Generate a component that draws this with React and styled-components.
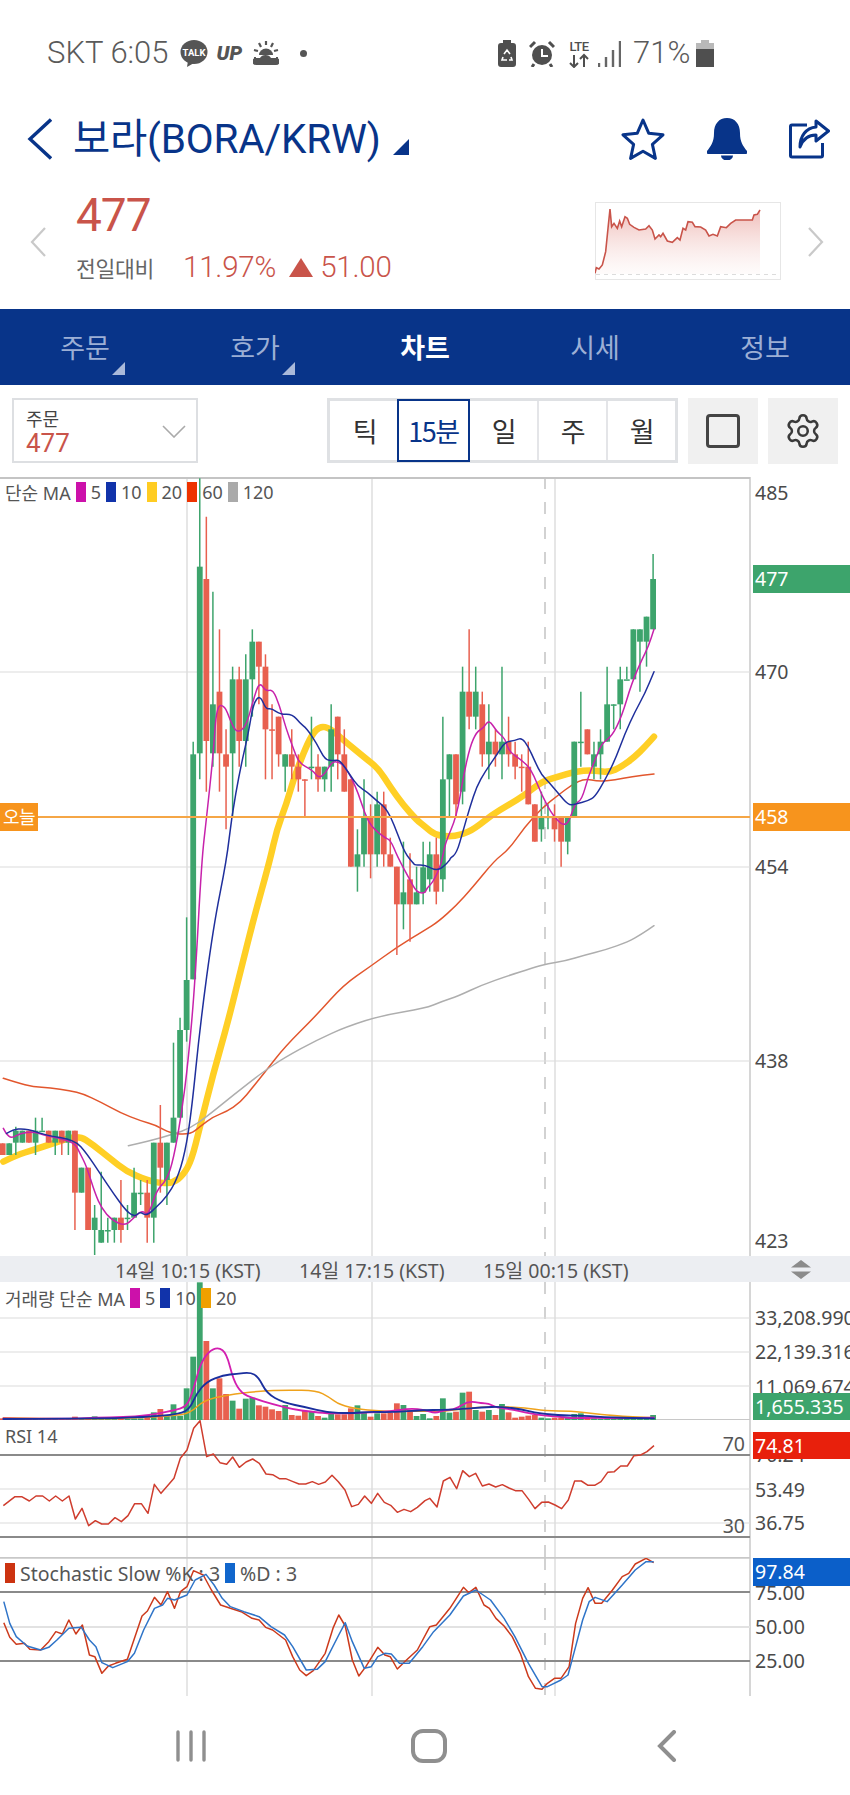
import React from 'react';
import styled, { createGlobalStyle } from 'styled-components';
import { Settings } from 'lucide-react';

const navy = '#083489';
const upRed = '#c9544a';
const green = '#3da46c';
const red = '#e8604f';
const font = '"Noto Sans", "Noto Sans CJK KR", sans-serif';
const headFont = 'Roboto, "Noto Sans CJK KR", sans-serif';

const GlobalStyle = createGlobalStyle`
  html, body { margin: 0; padding: 0; background: #fff; }
  body { font-family: ${font}; }
`;

const Page = styled.div`
  width: 850px;
  height: 1795px;
  overflow: hidden;
  background: #fff;
`;

/* status bar */
const StatusBar = styled.div`
  height: 100px;
  box-sizing: border-box;
  padding: 40px 0 0 47px;
  display: flex;
  align-items: flex-start;
  font-family: ${headFont};
  color: #5a5a5a;
`;
const StatusText = styled.span`
  font-size: 31px;
  line-height: 26px;
  font-weight: 300;
  letter-spacing: 0;
  white-space: nowrap;
  margin-left: ${p => p.$gap || 0}px;
`;
const UpMark = styled.span`
  font: italic 900 20px/26px Roboto, sans-serif;
  margin: 0 11px 0 9px;
  color: #555;
`;
const Dot = styled.span`
  width: 7px;
  height: 7px;
  border-radius: 50%;
  background: #555;
  margin: 10px 0 0 21px;
`;
const StatusRight = styled.div`
  margin-left: 191px;
  display: flex;
  align-items: flex-start;
`;
const StatusIcon = styled.svg`
  display: block;
  flex: none;
  margin-left: ${p => p.$gap || 0}px;
`;

/* header */
const Header = styled.div`
  height: 78px;
  display: flex;
  align-items: center;
  padding-left: 27px;
  color: ${navy};
`;
const Title = styled.h1`
  margin: 0 0 0 21px;
  font: 400 40.5px/46px ${headFont};
  letter-spacing: -0.2px;
  color: ${navy};
`;
const TitleCaret = styled.span`
  width: 0;
  height: 0;
  margin: 16px 0 0 12px;
  border-left: 16px solid transparent;
  border-bottom: 16px solid ${navy};
`;
const HeaderActions = styled.div`
  margin-left: auto;
  display: flex;
  align-items: center;
  padding-right: 20px;
  gap: 42px;
`;

/* quote */
const Quote = styled.div`
  height: 131px;
  box-sizing: border-box;
  padding: 24px 26px 0 30px;
  display: flex;
  align-items: flex-start;
`;
const PrevArrow = styled.svg`
  display: block;
  flex: none;
  margin-top: 25px;
`;
const PriceCol = styled.div`
  margin: -12px 0 0 30px;
`;
const Price = styled.div`
  font: 400 46px/50px ${headFont};
  color: ${upRed};
  letter-spacing: -1px;
`;
const ChangeRow = styled.div`
  margin-top: 9px;
  display: flex;
  align-items: center;
  font-family: ${headFont};
  white-space: nowrap;
`;
const ChangeLabel = styled.span`
  font-size: 21.5px;
  color: #666;
  width: 107px;
  letter-spacing: -0.3px;
`;
const ChangeValue = styled.span`
  font-size: 29.5px;
  line-height: 36px;
  font-weight: 300;
  color: ${upRed};
  letter-spacing: -0.2px;
`;
const UpTriangle = styled.span`
  width: 0;
  height: 0;
  margin: 0 7px 0 13px;
  border-left: 12px solid transparent;
  border-right: 12px solid transparent;
  border-bottom: 19px solid ${upRed};
`;
const Spark = styled.svg`
  margin-left: auto;
  display: block;
  flex: none;
`;
const NextArrow = styled(PrevArrow)`
  margin-left: 27px;
`;

/* tabs */
const TabBar = styled.div`
  height: 76px;
  background: ${navy};
  display: grid;
  grid-template-columns: repeat(5, 1fr);
`;
const Tab = styled.div`
  position: relative;
  display: flex;
  align-items: center;
  justify-content: center;
  padding-bottom: 1px;
  font-size: 27px;
  font-family: "Noto Sans CJK KR", sans-serif;
  font-weight: ${p => (p.$active ? 700 : 400)};
  color: ${p => (p.$active ? '#fff' : '#9cafd5')};
`;
const TabMark = styled.span`
  position: absolute;
  left: 112px;
  top: 53px;
  width: 0;
  height: 0;
  border-left: 13px solid transparent;
  border-bottom: 13px solid #a9b9da;
`;

/* toolbar */
const Toolbar = styled.div`
  height: 92px;
  box-sizing: border-box;
  padding: 13px 12px 0;
  display: flex;
  align-items: flex-start;
  font-family: "Noto Sans CJK KR", sans-serif;
`;
const Select = styled.div`
  width: 186px;
  height: 65px;
  box-sizing: border-box;
  border: 2px solid #dddfe2;
  padding: 8px 0 0 12px;
  position: relative;
`;
const SelectName = styled.div`
  font-size: 18px;
  line-height: 21px;
  color: #444;
`;
const SelectPrice = styled.div`
  font: 400 26px/28px ${headFont};
  color: ${upRed};
`;
const SelectCaret = styled.svg`
  position: absolute;
  right: 10px;
  top: 25px;
`;
const Periods = styled.div`
  margin-left: auto;
  width: 351px;
  height: 65px;
  box-sizing: border-box;
  border: 3px solid #dfe1e4;
  display: grid;
  grid-template-columns: repeat(5, 1fr);
`;
const Period = styled.div`
  display: flex;
  align-items: center;
  justify-content: center;
  font-size: 27px;
  letter-spacing: -1.5px;
  color: ${p => (p.$active ? navy : '#333')};
  box-shadow: ${p => (p.$active ? `0 0 0 2px ${navy}` : 'none')};
  border-left: ${p => (p.$first || p.$active ? 0 : '2px solid #e4e5e8')};
  position: relative;
  z-index: ${p => (p.$active ? 1 : 0)};
`;
const SquareButton = styled.div`
  width: 70px;
  height: 66px;
  margin-left: 10px;
  background: #f0f0f0;
  display: flex;
  align-items: center;
  justify-content: center;
  color: #3a3a3a;
`;
const SquareGlyph = styled.div`
  width: 34px;
  height: 34px;
  box-sizing: border-box;
  border: 3px solid #444;
  border-radius: 4px;
`;

/* chart */
const ChartArea = styled.div`
  width: 850px;
`;
const Panel = styled.div`
  position: relative;
  height: ${p => p.$h}px;
  overflow: hidden;
`;
const PanelSvg = styled.svg`
  display: block;
`;
const Legend = styled.div`
  position: absolute;
  left: 5px;
  top: ${p => p.$top}px;
  display: flex;
  align-items: center;
  gap: 5px;
  height: 22px;
  font-size: ${p => p.$size || 18}px;
  color: #555;
  white-space: nowrap;
  font-family: ${font};
`;
const Swatch = styled.span`
  width: 10px;
  height: 20px;
  background: ${p => p.$c};
`;
const AxisValue = styled.div`
  position: absolute;
  left: 755px;
  top: ${p => p.$y}px;
  transform: translateY(-50%);
  font-size: 19.5px;
  line-height: 24px;
  color: #4a4a4a;
  white-space: nowrap;
`;
const AxisTag = styled.div`
  position: absolute;
  left: 753px;
  right: 0;
  top: ${p => p.$y}px;
  height: ${p => p.$h}px;
  line-height: ${p => p.$h}px;
  padding-left: 2px;
  font-size: 19.5px;
  color: #fff;
  background: ${p => p.$bg};
`;
const LevelMark = styled.div`
  position: absolute;
  right: 105px;
  top: ${p => p.$y}px;
  transform: translateY(-50%);
  font-size: 19.5px;
  color: #555;
`;
const TodayTag = styled.div`
  position: absolute;
  left: 0;
  top: 326px;
  width: 38px;
  height: 28px;
  line-height: 26px;
  text-align: center;
  font-size: 18px;
  letter-spacing: -0.5px;
  font-family: "Noto Sans CJK KR", sans-serif;
  color: #fff;
  background: #f7941d;
`;
const TimeAxis = styled.div`
  height: 26px;
  background: #eceef2;
  display: flex;
  align-items: center;
  padding-left: 115px;
  gap: 40px;
  font-size: 19.5px;
  color: #555;
  position: relative;
`;
const TimeLabel = styled.span`
  width: 144px;
  white-space: nowrap;
`;
const Resize = styled.svg`
  position: absolute;
  left: 790px;
  top: 4px;
`;

/* nav */
const NavBar = styled.div`
  height: 99px;
  padding-left: 72px;
  display: grid;
  grid-template-columns: repeat(3, 238px);
  align-items: center;
  justify-items: center;
`;

const candleX = i => 2.67 + 6.57 * i;

// g/r, high, body top, body bottom, low, in 3x crop units
const lowerCandles = [
  ['r', 850, 850, 885, 885], ['g', 850, 850, 885, 885], ['g', 800, 812, 848, 885], ['g', 812, 812, 848, 848],
  ['r', 812, 812, 848, 848], ['g', 773, 812, 848, 885], ['g', 773, 812, 812, 812], ['r', 812, 812, 848, 848],
  ['g', 812, 812, 848, 885], ['r', 812, 812, 848, 885], ['g', 812, 812, 848, 885], ['r', 812, 812, 998, 1110],
  ['g', 923, 923, 998, 998], ['r', 923, 923, 1110, 1110], ['g', 1035, 1073, 1110, 1185], ['g', 935, 1110, 1148, 1148],
  ['g', 1073, 1110, 1110, 1148], ['g', 1073, 1073, 1110, 1148], ['r', 960, 1073, 1110, 1148], ['g', 1035, 1073, 1073, 1110],
  ['g', 923, 998, 1073, 1073], ['g', 960, 998, 998, 1035], ['r', 960, 998, 1073, 1148], ['g', 848, 848, 1073, 1148],
  ['r', 735, 848, 923, 998], ['g', 848, 848, 960, 1035], ['g', 548, 773, 848, 848], ['g', 473, 510, 773, 773],
  ['g', 172, 360, 510, 545],
];
const upperCandles = [
  ['g', 815, 853, 1528, 1528], ['g', 25, 290, 850, 928], ['r', 140, 327, 813, 965], ['g', 365, 703, 850, 890],
  ['r', 478, 665, 850, 965], ['r', 778, 853, 890, 1078], ['g', 590, 628, 850, 1040], ['r', 590, 628, 813, 890],
  ['g', 553, 628, 813, 890], ['g', 478, 515, 628, 740], ['r', 515, 515, 590, 703], ['r', 553, 590, 778, 928],
  ['r', 703, 778, 778, 928], ['r', 740, 740, 853, 890], ['g', 853, 853, 890, 965], ['r', 778, 853, 890, 928],
  ['r', 853, 890, 928, 965], ['r', 928, 928, 928, 1040], ['g', 740, 890, 890, 928], ['r', 853, 890, 928, 965],
  ['g', 890, 890, 928, 965], ['g', 703, 778, 890, 965], ['r', 740, 740, 853, 928], ['r', 778, 853, 965, 965],
  ['r', 928, 928, 1190, 1190], ['g', 1078, 1153, 1190, 1265], ['g', 928, 1040, 1153, 1190], ['r', 1003, 1040, 1153, 1225],
  ['g', 965, 1003, 1153, 1190], ['r', 965, 1003, 1153, 1190], ['r', 1103, 1153, 1190, 1190], ['r', 1190, 1190, 1303, 1455],
  ['g', 1115, 1267, 1303, 1378], ['r', 1150, 1228, 1303, 1415], ['g', 1190, 1267, 1303, 1303], ['g', 1115, 1192, 1267, 1303],
  ['g', 1115, 1153, 1228, 1265], ['r', 1103, 1153, 1265, 1303], ['g', 740, 928, 1228, 1265], ['g', 853, 853, 928, 1040],
  ['r', 853, 853, 1003, 1040], ['g', 590, 665, 965, 1003], ['r', 478, 665, 740, 778], ['g', 590, 665, 740, 778],
  ['r', 665, 703, 853, 890], ['g', 703, 815, 853, 928], ['r', 778, 815, 853, 890], ['g', 590, 815, 853, 928],
  ['r', 740, 815, 853, 890], ['r', 815, 853, 890, 928], ['r', 853, 890, 890, 965], ['r', 815, 890, 1003, 1003],
  ['r', 1003, 1003, 1115, 1115], ['g', 965, 1040, 1078, 1115], ['g', 1003, 1040, 1040, 1078], ['r', 1003, 1040, 1078, 1115],
  ['r', 1040, 1040, 1115, 1190], ['g', 1040, 1040, 1115, 1153], ['g', 815, 815, 1040, 1040], ['g', 665, 815, 815, 890],
  ['r', 778, 778, 853, 853], ['g', 815, 853, 890, 928], ['g', 778, 815, 853, 928], ['g', 590, 703, 815, 815],
  ['g', 703, 703, 703, 778], ['g', 590, 628, 703, 778], ['g', 590, 628, 628, 628], ['g', 478, 478, 628, 628],
  ['g', 478, 478, 515, 665], ['g', 440, 440, 515, 590], ['g', 252, 327, 478, 478],
];
const candles = [
  ...lowerCandles.map(c => [c[0], ...c.slice(1).map(z => 860 + z / 3)]),
  ...upperCandles.map(c => [c[0], ...c.slice(1).map(z => 470 + z / 3)]),
];

const volumeTops = [
  505, 505, 506, 506, 506, 506, 506, 506, 506, 506, 506, 500, 505, 505, 499, 505, 506, 505, 505, 506,
  505, 505, 495, 487, 477, 497, 463, 497, 415, 320, 97, 273, 415, 385, 432, 452, 476, 446, 443, 466,
  470, 478, 483, 465, 495, 497, 483, 483, 498, 503, 490, 493, 493, 475, 466, 488, 500, 490, 490, 488,
  460, 465, 480, 498, 492, 505, 498, 445, 488, 485, 428, 425, 480, 485, 480, 495, 462, 487, 503, 500,
  497, 495, 503, 505, 503, 503, 503, 492, 490, 500, 505, 507, 505, 505, 505, 507, 506, 506, 505, 495,
];

const mapPts = (pts, ox, oy, sx = 3, sy = 3) => pts.map(([x, y]) => [ox + x / sx, oy + y / sy]);
const toPoints = pts => pts.map(p => p.join(',')).join(' ');

// round the corners of a hand-read series through its midpoints
const smoothPath = pts => {
  const mid = (a, b) => [(a[0] + b[0]) / 2, (a[1] + b[1]) / 2];
  let d = `M${pts[0].join(' ')}`;
  for (let i = 1; i < pts.length - 1; i++) {
    d += ` Q${pts[i].join(' ')} ${mid(pts[i], pts[i + 1]).join(' ')}`;
  }
  return `${d} L${pts[pts.length - 1].join(' ')}`;
};

const ma5 = [
  ...mapPts([[10, 805], [18, 822], [35, 835], [60, 820], [100, 815], [130, 825], [180, 835], [225, 850], [240, 880], [260, 920], [285, 1000], [305, 1045], [335, 1080], [375, 1098], [400, 1075], [425, 1050], [445, 1068], [470, 990], [500, 960], [520, 900], [545, 760], [565, 600], [585, 370], [605, 0]], 0, 860),
  ...mapPts([[620, 1040], [640, 850], [650, 705], [675, 708], [690, 750], [710, 790], [738, 770], [760, 690], [778, 635], [798, 665], [818, 657], [838, 705], [858, 775], [878, 830], [897, 880], [937, 900], [956, 925], [976, 910], [996, 875], [1015, 875], [1035, 890], [1055, 925], [1075, 970], [1094, 1030], [1114, 1070], [1153, 1103], [1172, 1110], [1192, 1160]], 0, 470),
  ...mapPts([[1230, 60], [1250, 97], [1275, 100]], 0, 860),
  ...mapPts([[5, 85], [25, 65], [50, 10]], 425, 860),
  ...mapPts([[60, 1120], [95, 1040], [115, 920], [135, 830], [155, 785], [175, 775], [192, 748], [215, 785], [240, 805], [252, 845], [290, 870], [320, 900], [350, 975], [385, 1040], [425, 1075], [450, 1000], [470, 990], [490, 920], [510, 870], [530, 820], [560, 800], [590, 740], [620, 640], [650, 570], [670, 530], [687, 478]], 425, 470),
];
const ma10 = [
  ...mapPts([[20, 820], [40, 808], [70, 806], [100, 812], [135, 825], [225, 840], [260, 880], [300, 940], [340, 1000], [380, 1055], [405, 1070], [420, 1055], [440, 1068], [470, 1040], [500, 1010], [530, 960], [555, 880], [575, 750], [600, 500], [640, 200], [680, 0]], 0, 860),
  ...mapPts([[695, 1040], [720, 900], [745, 790], [760, 700], [780, 675], [798, 718], [815, 715], [840, 733], [878, 733], [900, 760], [920, 775], [950, 820], [975, 870], [1000, 872], [1020, 870], [1050, 915], [1075, 950], [1100, 965], [1133, 995], [1153, 1010], [1172, 1040], [1192, 1090], [1215, 1150], [1240, 1180]], 0, 470),
  ...mapPts([[1245, 15], [1275, 15]], 0, 860),
  ...mapPts([[40, 35], [75, 0]], 425, 860),
  ...mapPts([[75, 1165], [95, 1150], [115, 1080], [135, 1010], [155, 950], [180, 905], [215, 855], [240, 815], [270, 812], [290, 803], [310, 830], [330, 875], [350, 915], [370, 935], [400, 970], [430, 1005], [450, 1003], [490, 992], [510, 980], [540, 930], [570, 870], [600, 790], [630, 725], [660, 670], [687, 605]], 425, 470),
];
const ma20 = [
  ...mapPts([[10, 905], [50, 885], [100, 870], [160, 850], [235, 825], [280, 855], [330, 895], [380, 935], [440, 960], [480, 970], [520, 968], [550, 945], [575, 900], [600, 800], [640, 640], [680, 500], [720, 340], [760, 180], [810, 0]], 0, 860),
  ...mapPts([[830, 1080], [860, 1000], [880, 930], [910, 850], [935, 795], [960, 768], [990, 775], [1030, 810], [1090, 860], [1135, 895], [1170, 950], [1210, 1005], [1250, 1050], [1275, 1070]], 0, 470),
  ...mapPts([[30, 1095], [70, 1100], [110, 1095], [150, 1075], [200, 1035], [250, 1005], [300, 975], [350, 935], [400, 920], [450, 905], [500, 900], [550, 908], [590, 890], [630, 860], [660, 830], [687, 800]], 425, 470),
];
const ma60 = [
  ...mapPts([[10, 655], [50, 668], [100, 680], [150, 684], [210, 692], [250, 702], [300, 725], [360, 758], [420, 782], [470, 796], [510, 820], [570, 824], [600, 800], [640, 770], [680, 755], [720, 728], [760, 680], [800, 630], [855, 560], [950, 465], [1030, 375], [1110, 320], [1190, 262], [1275, 210]], 0, 860),
  ...mapPts([[40, 185], [95, 135], [140, 85], [210, 0]], 425, 860),
  ...mapPts([[250, 1140], [300, 1070], [350, 1015], [400, 975], [440, 945], [480, 925], [520, 935], [570, 930], [620, 920], [687, 912]], 425, 470),
];
const ma120 = [
  ...mapPts([[385, 857], [450, 843], [520, 822], [570, 805], [620, 770], [700, 705], [790, 635], [850, 595], [950, 540], [1040, 500], [1150, 465], [1275, 445]], 0, 860),
  ...mapPts([[50, 425], [100, 408], [170, 375], [250, 347], [320, 325], [370, 310], [420, 303], [480, 285], [540, 270], [610, 245], [650, 222], [687, 197]], 425, 860),
];

const vol5 = [
  ...mapPts([[10, 505], [220, 507], [290, 502], [370, 502], [440, 497], [520, 482], [560, 470], [580, 420], [600, 345], [625, 305], [655, 291], [680, 310], [700, 390], [725, 430], [760, 445], [820, 463], [880, 478], [930, 485], [980, 490], [1050, 490], [1110, 487], [1170, 485], [1230, 475], [1275, 480]], 0, 1250),
  ...mapPts([[30, 490], [60, 480], [90, 478], [130, 453], [170, 460], [190, 460], [215, 473], [260, 478], [300, 487], [340, 495], [400, 500], [440, 505], [500, 503], [600, 505], [687, 503]], 425, 1250),
];
const vol10 = [
  ...mapPts([[10, 507], [300, 505], [430, 502], [540, 492], [570, 475], [590, 430], [620, 395], [670, 375], [710, 372], [750, 367], [775, 380], [800, 430], [850, 458], [920, 472], [980, 487], [1050, 490], [1110, 485], [1170, 487], [1275, 480]], 0, 1250),
  ...mapPts([[50, 480], [100, 478], [170, 472], [230, 470], [290, 478], [340, 490], [420, 497], [470, 497], [560, 503], [687, 505]], 425, 1250),
];
const vol20 = [
  ...mapPts([[10, 503], [220, 507], [400, 505], [520, 497], [570, 490], [610, 452], [680, 435], [780, 423], [860, 420], [950, 422], [985, 440], [1020, 465], [1080, 478], [1170, 485], [1275, 483]], 0, 1250),
  ...mapPts([[50, 485], [150, 472], [230, 470], [300, 473], [360, 483], [440, 483], [500, 490], [560, 497], [687, 503]], 425, 1250),
];

const rsi = [
  ...mapPts([[10, 767], [45, 740], [65, 740], [88, 753], [108, 738], [128, 738], [148, 753], [167, 738], [187, 753], [207, 738], [226, 807], [246, 775], [266, 827], [286, 812], [305, 822], [325, 822], [345, 803], [364, 815], [384, 797], [404, 761], [424, 761], [444, 790], [463, 703], [483, 730], [502, 708], [522, 685], [541, 625], [561, 600], [581, 535], [600, 512], [620, 620], [640, 612], [660, 638], [680, 643], [698, 621], [718, 652], [738, 636], [758, 627], [778, 640], [798, 672], [818, 674], [838, 686], [857, 686], [877, 694], [897, 702], [917, 702], [937, 695], [956, 703], [976, 696], [996, 676], [1015, 695], [1035, 720], [1055, 770], [1075, 763], [1094, 738], [1114, 760], [1133, 730], [1153, 757], [1172, 766], [1192, 787], [1212, 778], [1232, 785], [1252, 772], [1275, 752]], 0, 1250),
  ...mapPts([[14, 745], [36, 771], [55, 693], [75, 682], [95, 716], [113, 662], [133, 680], [152, 670], [172, 708], [192, 702], [212, 711], [232, 704], [252, 714], [271, 722], [291, 722], [311, 748], [330, 776], [350, 757], [370, 756], [390, 765], [410, 776], [430, 750], [449, 693], [469, 693], [489, 706], [509, 706], [528, 695], [548, 667], [568, 665], [587, 648], [607, 648], [627, 617], [647, 615], [666, 605], [687, 587]], 425, 1250),
];

const stochK = mapPts([[7, 248], [18, 292], [30, 313], [45, 310], [55, 328], [75, 330], [90, 305], [103, 275], [115, 282], [127, 240], [140, 282], [152, 255], [165, 345], [175, 350], [188, 400], [200, 378], [213, 370], [235, 358], [262, 228], [272, 213], [285, 172], [297, 195], [309, 155], [322, 205], [333, 155], [345, 140], [357, 92], [375, 105], [390, 150], [407, 195], [425, 205], [445, 215], [465, 235], [478, 240], [490, 262], [503, 270], [527, 300], [540, 350], [553, 390], [565, 407], [578, 392], [600, 340], [615, 262], [625, 225], [637, 258], [650, 360], [662, 408], [675, 380], [697, 322], [710, 345], [720, 350], [733, 387], [750, 360], [770, 330], [793, 260], [805, 255], [830, 205], [855, 142], [865, 158], [878, 142], [893, 195], [903, 205], [915, 235], [930, 258], [945, 290], [960, 340], [975, 410], [988, 445], [1000, 448], [1010, 430], [1023, 415], [1035, 415], [1050, 380], [1062, 250], [1075, 175], [1085, 143], [1098, 190], [1110, 190], [1130, 150], [1148, 110], [1160, 100], [1172, 72], [1192, 55], [1206, 68]], 0, 1540, 1.845);
const stochD = mapPts([[7, 185], [18, 250], [30, 290], [50, 318], [75, 330], [90, 322], [105, 300], [127, 265], [150, 262], [165, 300], [177, 320], [188, 368], [208, 383], [235, 365], [248, 340], [265, 270], [285, 205], [300, 195], [309, 175], [322, 180], [345, 165], [360, 120], [380, 103], [395, 135], [410, 175], [425, 200], [450, 215], [478, 230], [500, 260], [525, 285], [540, 320], [565, 390], [585, 388], [600, 365], [625, 285], [637, 248], [650, 305], [672, 385], [685, 380], [697, 350], [710, 340], [722, 342], [737, 370], [755, 370], [780, 320], [800, 275], [830, 225], [855, 168], [878, 150], [905, 180], [930, 235], [950, 290], [975, 370], [1000, 440], [1010, 440], [1035, 420], [1048, 405], [1062, 320], [1075, 240], [1087, 185], [1098, 172], [1120, 185], [1148, 135], [1172, 90], [1192, 65], [1206, 65]], 0, 1540, 1.845);

const sparkLine = mapPts([[18, 235], [22, 218], [30, 222], [40, 210], [50, 170], [58, 90], [63, 42], [68, 95], [75, 85], [85, 100], [92, 78], [98, 95], [108, 65], [115, 70], [122, 88], [135, 97], [150, 105], [170, 102], [180, 92], [190, 105], [198, 132], [210, 120], [215, 125], [222, 115], [235, 138], [250, 142], [265, 128], [273, 135], [282, 100], [290, 105], [297, 80], [310, 82], [318, 95], [335, 96], [350, 105], [360, 123], [372, 118], [385, 123], [395, 95], [412, 98], [425, 85], [440, 75], [490, 75], [495, 60], [505, 58], [513, 45]], -6, -7);

const Line = ({ pts, color, w = 1.5 }) => (
  <path d={smoothPath(pts)} fill="none" stroke={color} strokeWidth={w} strokeLinejoin="round" strokeLinecap="round" />
);

const SharpLine = ({ pts, color, w = 1.5 }) => (
  <polyline points={toPoints(pts)} fill="none" stroke={color} strokeWidth={w} strokeLinejoin="round" />
);

const PanelFrame = ({ top, h, hLines = [], children }) => (
  <PanelSvg width="850" height={h} viewBox={`0 ${top} 850 ${h}`}>
    {[187, 372, 555].map(x => (
      <line key={x} x1={x} x2={x} y1={top} y2={top + h} stroke="#d6d6d6" strokeWidth="1.2" />
    ))}
    <line x1="545" x2="545" y1={top} y2={top + h} stroke="#d2d2d2" strokeWidth="2" strokeDasharray="12 13" />
    <line x1="750" x2="750" y1={top} y2={top + h} stroke="#c8c8c8" strokeWidth="1.5" />
    {hLines.map(([y, color, w]) => (
      <line key={y} x1="0" x2="750" y1={y} y2={y} stroke={color || '#dcdcdc'} strokeWidth={w || 1.2} />
    ))}
    {children}
  </PanelSvg>
);

const Candle = ({ i, c }) => {
  const [t, hi, top, bot, lo] = c;
  const color = t === 'g' ? green : red;
  const x = candleX(i);
  return (
    <g>
      <line x1={x} x2={x} y1={hi} y2={lo} stroke={color} strokeWidth="1.5" />
      <rect x={x - 2.9} y={top} width="5.8" height={Math.max(bot - top, 1.5)} fill={color} />
    </g>
  );
};

const StatusIcons = () => (
  <>
    <StatusIcon $gap={11} width="28" height="27" viewBox="0 0 28 27">
      <ellipse cx="14" cy="12" rx="13.5" ry="12" fill="#555" />
      <path d="M8 21 L7 27 L14 23z" fill="#555" />
      <text x="14" y="15.500" textAnchor="middle" fontSize="9.500" fontWeight="700" fill="#fff" fontFamily="Roboto, sans-serif">TALK</text>
    </StatusIcon>
    <UpMark>UP</UpMark>
    <StatusIcon width="26" height="26" viewBox="0 0 26 26">
      <path d="M13 1v4M6 3l2 4M20 3l-2 4M1 10l4 1M25 10l-4 1M1 18h2M23 18h2" stroke="#555" strokeWidth="2.2" />
      <path d="M6 15a7 6.500 0 0 1 14 0z" fill="#555" />
      <path d="M3 25a3.500 3.500 0 0 1 0-7h4a6 5 0 0 1 11 0h5a3.500 3.500 0 0 1 0 7z" fill="#555" />
    </StatusIcon>
    <Dot />
  </>
);

const StatusIconsRight = () => (
  <StatusRight>
    <StatusIcon width="18" height="27" viewBox="0 0 18 27">
      <path d="M5 0h8v3h2a3 3 0 0 1 3 3v18a3 3 0 0 1-3 3H3a3 3 0 0 1-3-3V6a3 3 0 0 1 3-3h2z" fill="#4f4f4f" />
      <path d="M6 14l3-4 3 4M5 17l-1 3h5M13 17l1 3h-3" fill="none" stroke="#fff" strokeWidth="1.6" />
    </StatusIcon>
    <StatusIcon $gap={13} width="26" height="27" viewBox="0 0 26 27">
      <circle cx="13" cy="15" r="10" fill="#4f4f4f" />
      <path d="M13 9v7h6" stroke="#fff" strokeWidth="2" fill="none" />
      <path d="M1 7l5-5M25 7l-5-5M5 24l-2 3M21 24l2 3" stroke="#4f4f4f" strokeWidth="3" />
    </StatusIcon>
    <StatusIcon $gap={12} width="24" height="28" viewBox="0 0 24 28">
      <text x="12" y="11" textAnchor="middle" fontSize="13" fontWeight="500" fill="#4f4f4f" fontFamily="Roboto, sans-serif" letterSpacing="-0.5">LTE</text>
      <path d="M7 27V15M3 23l4 4 4-4M17 27V15M13 19l4-4 4 4" fill="none" stroke="#4f4f4f" strokeWidth="2" />
    </StatusIcon>
    <StatusIcon $gap={7} width="23" height="27" viewBox="0 0 23 27">
      <path d="M1 27v-4M8 27v-10M15 27v-17M22 27V1" stroke="#666" strokeWidth="2.4" />
    </StatusIcon>
    <StatusText $gap={12}>71%</StatusText>
    <StatusIcon $gap={6} width="18" height="27" viewBox="0 0 18 27">
      <path d="M5 0h8v3h5v6H0V3h5z" fill="#b9b9b9" />
      <path d="M0 9h18v18H0z" fill="#4f4f4f" />
    </StatusIcon>
  </StatusRight>
);

const App = () => (
  <Page>
    <GlobalStyle />
    <StatusBar>
      <StatusText>SKT 6:05</StatusText>
      <StatusIcons />
      <StatusIconsRight />
    </StatusBar>

    <Header>
      <svg width="25" height="42" viewBox="0 0 25 42" fill="none" stroke={navy} strokeWidth="3.400">
        <path d="M24 1.500 L3 21 L24 40.500" />
      </svg>
      <Title>보라(BORA/KRW)</Title>
      <TitleCaret />
      <HeaderActions>
        <svg width="44" height="42" viewBox="0 0 44 42" fill="none" stroke={navy} strokeWidth="3" strokeLinejoin="round">
          <path d="M22 2 L27.800 15.300 L42 16.800 L31.400 26.400 L34.400 40.400 L22 33.200 L9.600 40.400 L12.600 26.400 L2 16.800 L16.200 15.300z" />
        </svg>
        <svg width="40" height="42" viewBox="0 0 40 42" fill={navy}>
          <path d="M20 0c-8 0-13 6-13 15 0 9-3 13-7 18-1 2 0 3 2 3h36c2 0 3-1 2-3-4-5-7-9-7-18 0-9-5-15-13-15z" />
          <path d="M14 37.500h12a6 5 0 0 1-12 0z" />
        </svg>
        <svg width="41" height="40" viewBox="0 0 41 40" fill="none" stroke={navy} strokeWidth="3" strokeLinejoin="round">
          <path d="M18 6H3a1.500 1.500 0 0 0-1.500 1.500v29A1.500 1.500 0 0 0 3 38h29a1.500 1.500 0 0 0 1.500-1.500V24" />
          <path d="M27 2 L39.500 12 L27 22 V16 C19 16 14 20 11 28 C11 17 17 9 27 8z" />
        </svg>
      </HeaderActions>
    </Header>

    <Quote>
      <PrevArrow width="16" height="30" viewBox="0 0 16 30" fill="none" stroke="#c9c9c9" strokeWidth="2.200">
        <path d="M15 1 L2 15 L15 29" />
      </PrevArrow>
      <PriceCol>
        <Price>477</Price>
        <ChangeRow>
          <ChangeLabel>전일대비</ChangeLabel>
          <ChangeValue>11.97%</ChangeValue>
          <UpTriangle />
          <ChangeValue>51.00</ChangeValue>
        </ChangeRow>
      </PriceCol>
      <Spark width="186" height="78" viewBox="0 0 186 78">
        <defs>
          <linearGradient id="sparkFill" x1="0" x2="0" y1="0" y2="1">
            <stop offset="0" stopColor="#e8a09a" stopOpacity="0.7" />
            <stop offset="1" stopColor="#f6d8d5" stopOpacity="0.1" />
          </linearGradient>
        </defs>
        <rect x="0.5" y="0.5" width="185" height="77" fill="#fff" stroke="#e6e6e6" />
        <polygon points={`${toPoints(sparkLine)} 165,72 0,72`} fill="url(#sparkFill)" />
        <line x1="1" x2="185" y1="72.500" y2="72.500" stroke="#dcdcdc" strokeDasharray="4 4" />
        <polyline points={toPoints(sparkLine)} fill="none" stroke="#c9544a" strokeWidth="1.600" />
      </Spark>
      <NextArrow width="16" height="30" viewBox="0 0 16 30" fill="none" stroke="#c9c9c9" strokeWidth="2.200">
        <path d="M1 1 L14 15 L1 29" />
      </NextArrow>
    </Quote>

    <TabBar>
      <Tab>주문<TabMark /></Tab>
      <Tab>호가<TabMark /></Tab>
      <Tab $active>차트</Tab>
      <Tab>시세</Tab>
      <Tab>정보</Tab>
    </TabBar>

    <Toolbar>
      <Select>
        <SelectName>주문</SelectName>
        <SelectPrice>477</SelectPrice>
        <SelectCaret width="24" height="13" viewBox="0 0 24 13" fill="none" stroke="#aaa" strokeWidth="1.600">
          <path d="M1 1 L12 12 L23 1" />
        </SelectCaret>
      </Select>
      <Periods>
        <Period $first>틱</Period>
        <Period $active>15분</Period>
        <Period>일</Period>
        <Period>주</Period>
        <Period>월</Period>
      </Periods>
      <SquareButton><SquareGlyph /></SquareButton>
      <SquareButton><Settings size={38} strokeWidth={1.6} /></SquareButton>
    </Toolbar>

    <ChartArea>
      <Panel $h={779}>
        <PanelFrame top={477} h={779} hLines={[[477.5, '#c4c4c4', 3], [672], [867], [1061]]}>
          <Line pts={ma20} color="#ffcf25" w={6.5} />
          <Line pts={ma60} color="#e2562d" />
          <Line pts={ma120} color="#aeaeae" />
          {candles.map((c, i) => <Candle key={i} i={i} c={c} />)}
          <Line pts={ma5} color="#c722ab" />
          <Line pts={ma10} color="#1f2f9c" />
          <line x1="0" x2="750" y1="817" y2="817" stroke="#f5a646" strokeWidth="1.800" />
        </PanelFrame>
        <Legend $top={4}>
          단순 MA<Swatch $c="#cc11aa" />5<Swatch $c="#1133aa" />10<Swatch $c="#ffcc22" />20<Swatch $c="#ee3300" />60<Swatch $c="#aaaaaa" />120
        </Legend>
        <TodayTag>오늘</TodayTag>
        <AxisValue $y={16}>485</AxisValue>
        <AxisTag $y={88} $h={28} $bg={green}>477</AxisTag>
        <AxisValue $y={195}>470</AxisValue>
        <AxisTag $y={326} $h={28} $bg="#f7941d">458</AxisTag>
        <AxisValue $y={390}>454</AxisValue>
        <AxisValue $y={584}>438</AxisValue>
        <AxisValue $y={764}>423</AxisValue>
      </Panel>

      <TimeAxis>
        <TimeLabel>14일 10:15 (KST)</TimeLabel>
        <TimeLabel>14일 17:15 (KST)</TimeLabel>
        <TimeLabel>15일 00:15 (KST)</TimeLabel>
        <Resize width="22" height="19" viewBox="0 0 22 19" fill="#8b8b8b">
          <path d="M11 0 L21 7.500 H1z M11 19 L21 11.500 H1z" />
        </Resize>
      </TimeAxis>

      <Panel $h={138}>
        <PanelFrame top={1282} h={138} hLines={[[1318], [1352], [1386], [1419.5, '#c8c8c8', 1.2]]}>
          {candles.map((c, i) => (
            <rect key={i} x={candleX(i) - 2.9} y={1250 + volumeTops[i] / 3} width="5.800" height={Math.max(1420 - 1250 - volumeTops[i] / 3, 0)} fill={c[0] === 'g' ? green : red} />
          ))}
          <Line pts={vol20} color="#efa21c" />
          <Line pts={vol5} color="#d31fb0" w={1.8} />
          <Line pts={vol10} color="#1a2f9e" w={1.8} />
        </PanelFrame>
        <Legend $top={5}>
          거래량 단순 MA<Swatch $c="#cc11aa" />5<Swatch $c="#1133aa" />10<Swatch $c="#f0a000" />20
        </Legend>
        <AxisValue $y={36}>33,208.990</AxisValue>
        <AxisValue $y={70}>22,139.316</AxisValue>
        <AxisValue $y={105}>11,069.674</AxisValue>
        <AxisTag $y={111} $h={27} $bg={green}>1,655.335</AxisTag>
      </Panel>

      <Panel $h={138}>
        <PanelFrame top={1420} h={138} hLines={[[1455, '#8a8a8a', 2], [1489], [1523], [1537, '#8a8a8a', 2], [1557.5, '#c8c8c8', 1.2]]}>
          <SharpLine pts={rsi} color="#cf3d2e" />
        </PanelFrame>
        <Legend $top={5}>RSI 14</Legend>
        <LevelMark $y={23}>70</LevelMark>
        <LevelMark $y={105}>30</LevelMark>
        <AxisValue $y={35}>70.24</AxisValue>
        <AxisTag $y={12} $h={27} $bg="#e8200c">74.81</AxisTag>
        <AxisValue $y={70}>53.49</AxisValue>
        <AxisValue $y={103}>36.75</AxisValue>
      </Panel>

      <Panel $h={138}>
        <PanelFrame top={1558} h={138} hLines={[[1558, '#c8c8c8', 1.5], [1592, '#8a8a8a', 1.8], [1627, '#e2e2e2', 2], [1661, '#8a8a8a', 1.8]]}>
          <SharpLine pts={stochK} color="#cc3a1c" />
          <SharpLine pts={stochD} color="#2f74c8" />
        </PanelFrame>
        <Legend $top={4} $size={19.5}>
          <Swatch $c="#cc3311" />Stochastic Slow %K : 3<Swatch $c="#1166cc" />%D : 3
        </Legend>
        <AxisValue $y={35}>75.00</AxisValue>
        <AxisValue $y={69}>50.00</AxisValue>
        <AxisValue $y={103}>25.00</AxisValue>
        <AxisTag $y={0} $h={28} $bg="#0b5fc9">97.84</AxisTag>
      </Panel>
    </ChartArea>

    <NavBar>
      <svg width="32" height="32" viewBox="0 0 32 32" stroke="#8f8f8f" strokeWidth="3.400" strokeLinecap="round">
        <path d="M3 2v28M16 2v28M29 2v28" />
      </svg>
      <svg width="36" height="34" viewBox="0 0 36 34" fill="none" stroke="#8f8f8f" strokeWidth="4">
        <rect x="2" y="2" width="32" height="30" rx="10" />
      </svg>
      <svg width="20" height="32" viewBox="0 0 20 32" fill="none" stroke="#8f8f8f" strokeWidth="4" strokeLinecap="round">
        <path d="M17 2 L3 16 L17 30" />
      </svg>
    </NavBar>
  </Page>
);

export default App;
